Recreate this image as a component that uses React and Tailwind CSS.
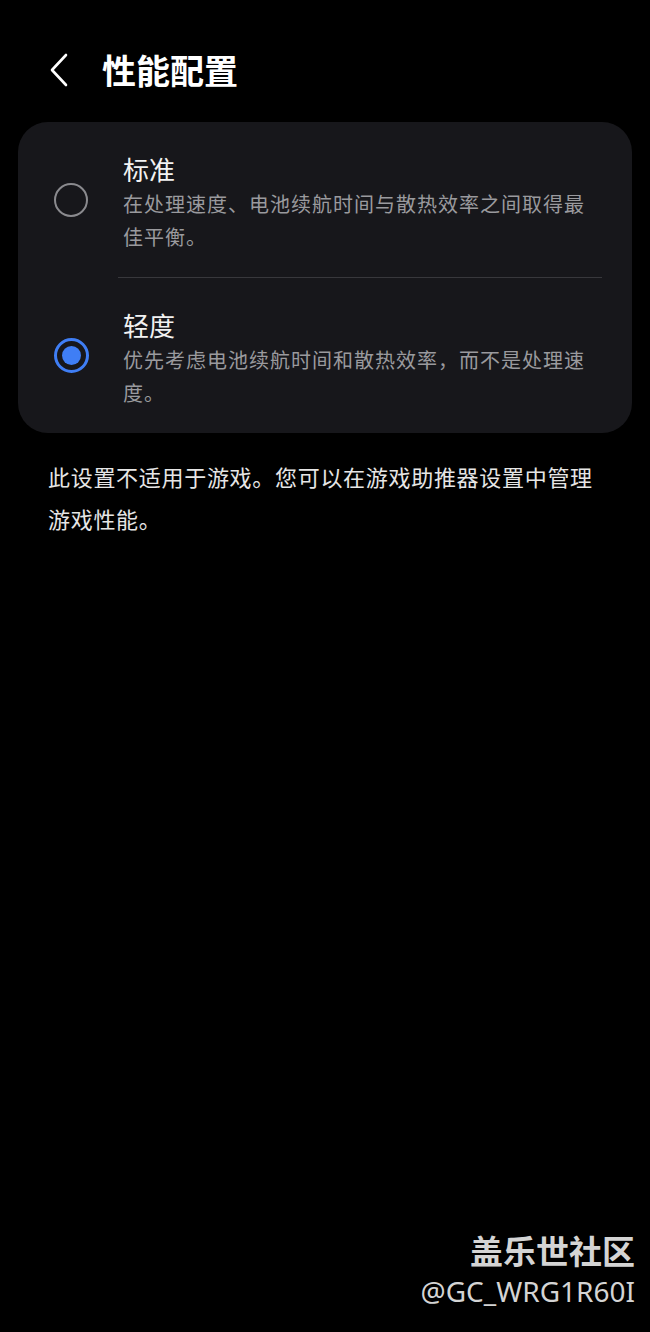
import React, { useState } from 'react';

const font = "font-['Noto_Sans_CJK_SC','Noto_Sans',sans-serif]";

const options = [
  { id: 'standard', title: '标准', desc: '在处理速度、电池续航时间与散热效率之间取得最佳平衡。' },
  { id: 'light', title: '轻度', desc: '优先考虑电池续航时间和散热效率，而不是处理速度。' },
];

const Radio = ({ checked }) => (
  <div className="w-[70px] shrink-0 flex items-center justify-center mb-[5px]">
    {checked ? (
      <div className="w-[35px] h-[35px] rounded-full border-[3px] border-[#3f7ef5] flex items-center justify-center">
        <div className="w-[19px] h-[19px] rounded-full bg-[#3f7ef5]" />
      </div>
    ) : (
      <div className="w-[34px] h-[34px] rounded-full border-2 border-[#8a8a8e]" />
    )}
  </div>
);

export default function App() {
  const [selected, setSelected] = useState('light');

  return (
    <div className={`w-[650px] h-[1332px] bg-black text-white flex flex-col ${font}`}>
      {/* Header */}
      <div className="flex items-center h-[80px] mt-[30px] pl-[46px]">
        <svg width="24" height="34" viewBox="0 0 24 34" fill="none">
          <path d="M20 2 L6 17 L20 32" stroke="#ffffff" strokeWidth="2.6" strokeLinecap="round" strokeLinejoin="round" />
        </svg>
        <h1 className="ml-[32px] text-[34px] font-bold leading-none">性能配置</h1>
      </div>

      {/* Options */}
      <div className="mx-[18px] mt-[12px] rounded-[30px] bg-[#17171b] pr-[30px]">
        {options.map((opt, i) => (
          <React.Fragment key={opt.id}>
            {i > 0 && <div className="ml-[100px] h-px bg-[#38383c]" />}
            <div
              className="flex items-center pl-[18px] pt-[29px] pb-[24px] cursor-pointer"
              onClick={() => setSelected(opt.id)}
            >
              <Radio checked={selected === opt.id} />
              <div className="ml-[17px] flex-1">
                <div className="text-[26px] leading-[36px] text-[#f2f2f2]">{opt.title}</div>
                <p className="text-[20px] leading-[33px] tracking-[1px] text-[#9a9a9e]">{opt.desc}</p>
              </div>
            </div>
          </React.Fragment>
        ))}
      </div>

      {/* Note */}
      <p className="px-[48px] mt-[22px] text-[22px] leading-[42px] tracking-[0.7px] text-[#e6e6e6]">
        此设置不适用于游戏。您可以在游戏助推器设置中管理游戏性能。
      </p>

      <div className="flex-1" />

      {/* Watermark */}
      <div className="flex flex-col items-end pr-[15px] pb-[22px] text-[#d4d4d4]">
        <div className="text-[33px] font-bold leading-[40px] mb-[2px]">盖乐世社区</div>
        <div className="text-[28px] leading-[38px] font-['Noto_Sans',sans-serif]">@GC_WRG1R60I</div>
      </div>
    </div>
  );
}
